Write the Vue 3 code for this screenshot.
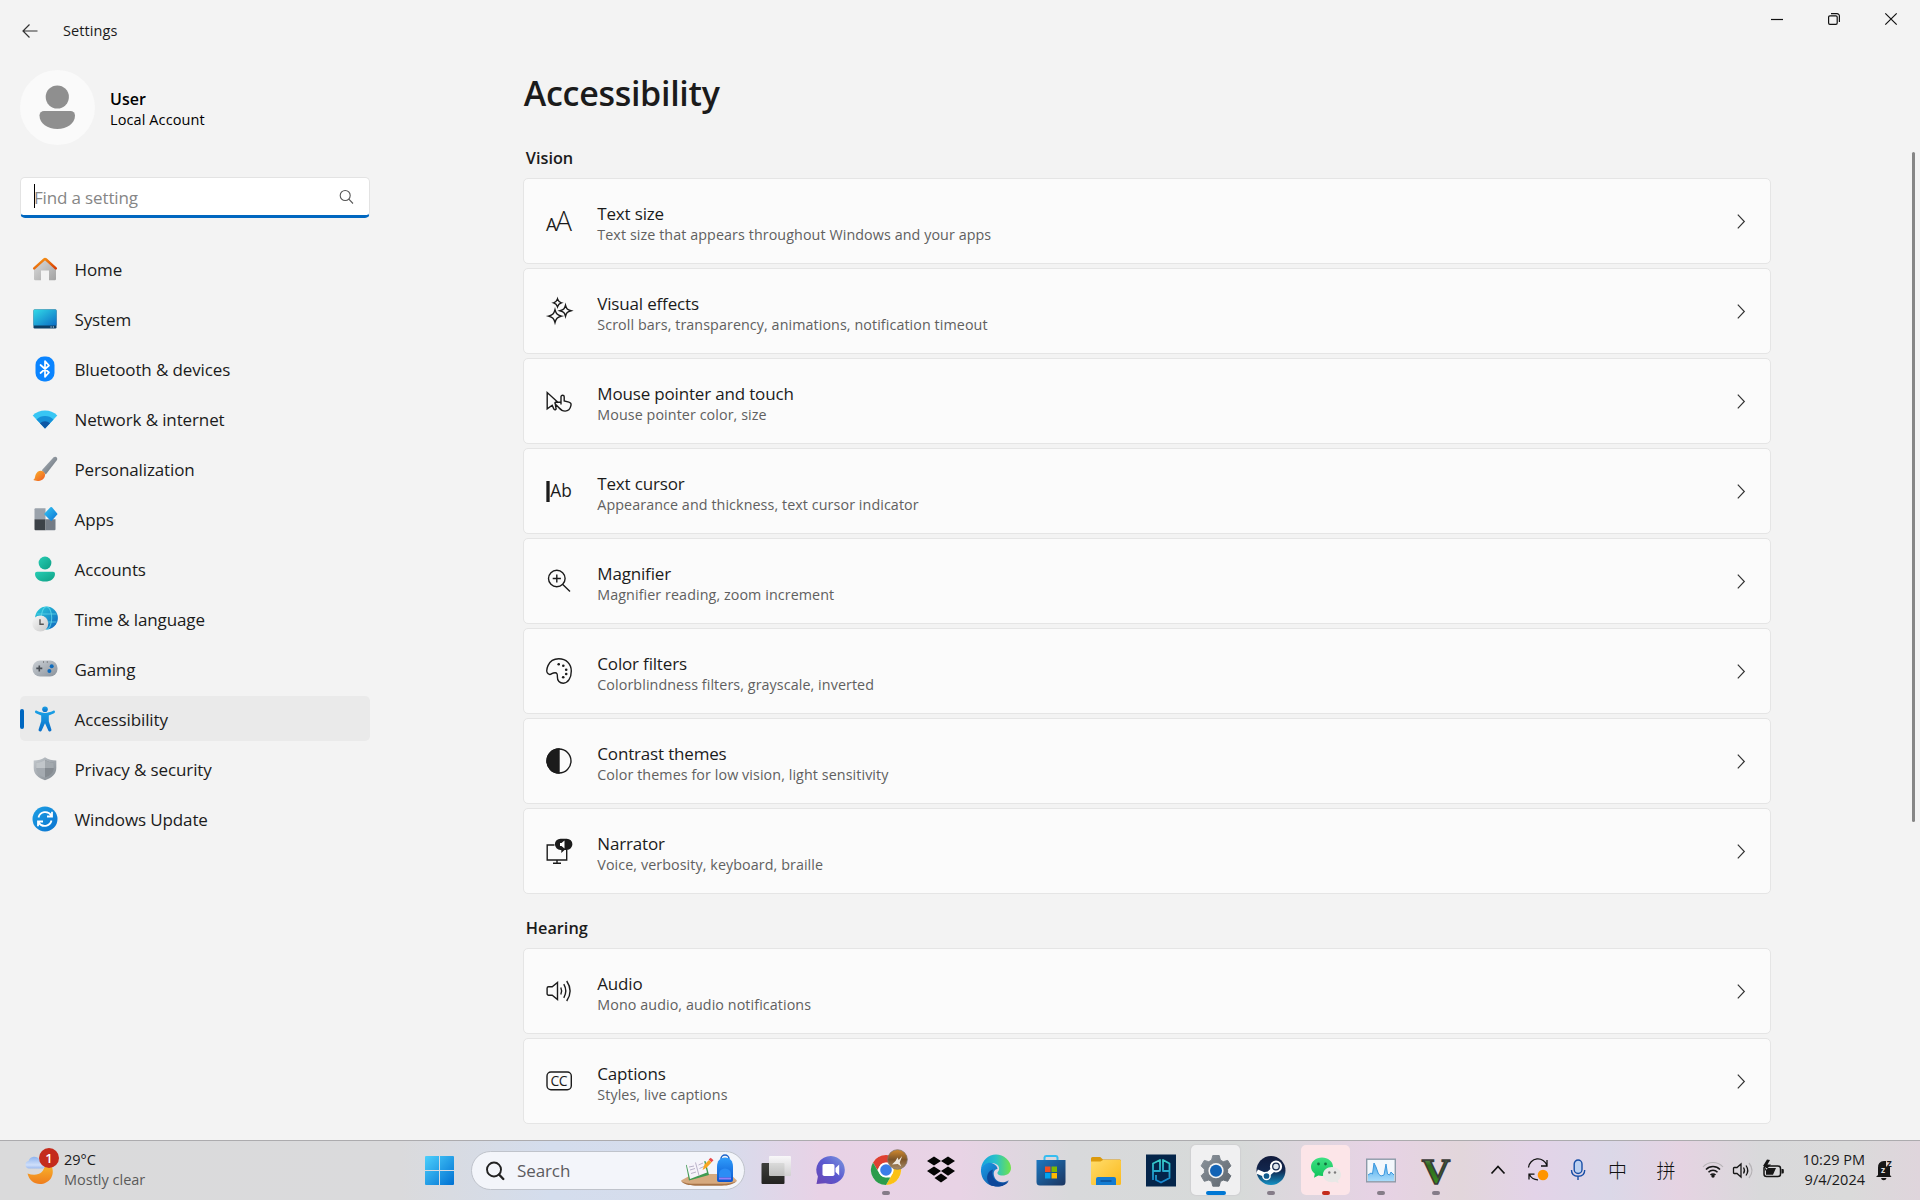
<script setup>
const nav = [
  { id: 'home', label: 'Home' },
  { id: 'system', label: 'System' },
  { id: 'bluetooth', label: 'Bluetooth & devices' },
  { id: 'network', label: 'Network & internet' },
  { id: 'personalization', label: 'Personalization' },
  { id: 'apps', label: 'Apps' },
  { id: 'accounts', label: 'Accounts' },
  { id: 'time', label: 'Time & language' },
  { id: 'gaming', label: 'Gaming' },
  { id: 'accessibility', label: 'Accessibility', active: true },
  { id: 'privacy', label: 'Privacy & security' },
  { id: 'update', label: 'Windows Update' },
]

const sections = [
  {
    title: 'Vision',
    items: [
      { id: 'textsize', title: 'Text size', desc: 'Text size that appears throughout Windows and your apps' },
      { id: 'effects', title: 'Visual effects', desc: 'Scroll bars, transparency, animations, notification timeout' },
      { id: 'pointer', title: 'Mouse pointer and touch', desc: 'Mouse pointer color, size' },
      { id: 'cursor', title: 'Text cursor', desc: 'Appearance and thickness, text cursor indicator' },
      { id: 'magnifier', title: 'Magnifier', desc: 'Magnifier reading, zoom increment' },
      { id: 'filters', title: 'Color filters', desc: 'Colorblindness filters, grayscale, inverted' },
      { id: 'contrast', title: 'Contrast themes', desc: 'Color themes for low vision, light sensitivity' },
      { id: 'narrator', title: 'Narrator', desc: 'Voice, verbosity, keyboard, braille' },
    ],
  },
  {
    title: 'Hearing',
    items: [
      { id: 'audio', title: 'Audio', desc: 'Mono audio, audio notifications' },
      { id: 'captions', title: 'Captions', desc: 'Styles, live captions' },
    ],
  },
]

const tasks = [
  { id: 'taskview' },
  { id: 'chat' },
  { id: 'chrome', mark: 'run' },
  { id: 'dropbox' },
  { id: 'edge' },
  { id: 'store' },
  { id: 'explorer' },
  { id: 'shield' },
  { id: 'settings', mark: 'current' },
  { id: 'steam', mark: 'run' },
  { id: 'wechat', mark: 'alert' },
  { id: 'monitor', mark: 'run' },
  { id: 'vgame', mark: 'run' },
]

// 26 x 26 artwork for the navigation list
const navArt = {
  home: `<defs><linearGradient id="h1" x2="1" y2="1"><stop stop-color="#dedede"/><stop offset="1" stop-color="#a2a2a2"/></linearGradient><linearGradient id="h2" x2="1" y2="1"><stop stop-color="#f9a01b"/><stop offset="1" stop-color="#d83b01"/></linearGradient></defs>
    <path d="M2 11.500 13 1.800l11 9.700V23a1.200 1.200 0 0 1-1.200 1.200H17V14.500H9v9.700H3.200A1.200 1.200 0 0 1 2 23z" fill="url(#h1)"/><path d="M2.200 12.400 12.200 3.300a1.200 1.200 0 0 1 1.600 0l10 9.100" fill="none" stroke="url(#h2)" stroke-width="2.500" stroke-linecap="round"/>`,
  system: `<defs><linearGradient id="s1" x2="1" y2="1"><stop stop-color="#32dbe8"/><stop offset="1" stop-color="#0b6cc4"/></linearGradient></defs>
    <rect x="1.500" y="3.500" width="23" height="19" rx="1.200" fill="#0c3f66"/><path d="M1.500 19.500V4.700a1.200 1.200 0 0 1 1.200-1.200h20.600a1.200 1.200 0 0 1 1.200 1.200v14.800z" fill="url(#s1)"/><path d="M18.500 20.500h1.200v1h-1.200zM20.800 20.500H22v1h-1.200z" fill="#cfe6f5"/>`,
  bluetooth: `<rect x="3.500" y=".5" width="19" height="25" rx="8.500" fill="#0a84ff"/><path d="M8.500 9 17 16.500 13 20.800V5.200L17 9.500 8.500 17" fill="none" stroke="#fff" stroke-width="1.700" stroke-linejoin="round" stroke-linecap="round"/>`,
  network: `<path d="M13 22.500.7 9.500a17.500 17.500 0 0 1 24.600 0z" fill="#38c6f4"/><path d="M13 22.500 4.500 13.400a12.300 12.300 0 0 1 17 0z" fill="#1690d8"/><path d="M13 22.500 8 17.200a7.400 7.400 0 0 1 10 0z" fill="#0d58a5"/>`,
  personalization: `<defs><linearGradient id="p1" x2="1" y2="1"><stop stop-color="#b4bcc4"/><stop offset="1" stop-color="#5d656d"/></linearGradient><linearGradient id="p2" x2="1" y2="1"><stop stop-color="#fbb62a"/><stop offset="1" stop-color="#ee5a24"/></linearGradient></defs>
    <path d="M9.800 14.300 21.600 1.300c1.800-1.600 4.600.2 3.400 2.600L13.800 18.400z" fill="url(#p1)"/><path d="M1 23.800c2 0 1.700-2.400 2.600-5 1.200-3.600 5-5.300 7.700-3.300 3 2.300 1.900 6.400-1 8.200-2.800 1.700-6.800 1.600-9.300.1z" fill="url(#p2)"/>`,
  apps: `<defs><linearGradient id="a1" x2="1" y2="1"><stop stop-color="#34c6f3"/><stop offset="1" stop-color="#0c74d4"/></linearGradient></defs>
    <path d="M2.500 3.200a1 1 0 0 1 1-1h10v11h-11z" fill="#9aa2ab"/><path d="M2.500 13.200h11v11h-10a1 1 0 0 1-1-1z" fill="#3c4248"/><path d="M13.500 13.200h10v10a1 1 0 0 1-1 1h-9z" fill="#747c86"/><path d="m18.400 1.300-5.700 5.900a1.100 1.100 0 0 0 0 1.600l5.700 5.800a1.100 1.100 0 0 0 1.600 0l5-5.800a1.100 1.100 0 0 0 0-1.600l-5-5.900a1.100 1.100 0 0 0-1.600 0z" fill="url(#a1)"/>`,
  accounts: `<defs><linearGradient id="c1" x2="1" y2="1"><stop stop-color="#27cdb4"/><stop offset="1" stop-color="#0f9f84"/></linearGradient></defs>
    <circle cx="13" cy="7" r="6.400" fill="url(#c1)"/><path d="M5 15.700h16a2 2 0 0 1 2 2c0 4.800-4.300 7.900-10 7.900S3 22.500 3 17.700a2 2 0 0 1 2-2z" fill="url(#c1)"/>`,
  time: `<defs><linearGradient id="t1" x2="1" y2="1"><stop stop-color="#2bd0dc"/><stop offset="1" stop-color="#0f62bd"/></linearGradient><linearGradient id="t2" x2="1" y2="1"><stop stop-color="#f8f8f8"/><stop offset="1" stop-color="#c8c8c8"/></linearGradient></defs>
    <circle cx="14.500" cy="12" r="11.400" fill="url(#t1)"/><path d="M4.500 8h20M4.500 16h20" stroke="#66dcec" stroke-width="1.100" opacity=".7"/><ellipse cx="14.500" cy="12" rx="5.200" ry="11.200" fill="none" stroke="#66dcec" stroke-width="1.100" opacity=".7"/><circle cx="8.300" cy="17.500" r="8" fill="url(#t2)"/><path d="M8 13.200v5h3.800" fill="none" stroke="#555" stroke-width="1.400"/>`,
  gaming: `<defs><linearGradient id="g1" x2="1" y2="1"><stop stop-color="#cbd0d5"/><stop offset="1" stop-color="#8a929b"/></linearGradient></defs>
    <rect x=".5" y="4.500" width="25" height="16" rx="7.500" fill="url(#g1)"/><path d="M11 6h1M14.800 6h1" stroke="#555" stroke-width="1.200"/><path d="M4.300 12.400h6M7.300 9.400v6" stroke="#484e55" stroke-width="1.600"/><circle cx="19.700" cy="10.200" r="2" fill="#0f6cbd"/><circle cx="17.400" cy="15" r="2" fill="#0f6cbd"/>`,
  accessibility: `<defs><linearGradient id="x1" x2="0" y2="1"><stop stop-color="#1ba1e6"/><stop offset="1" stop-color="#0a6fc9"/></linearGradient></defs>
    <g fill="url(#x1)"><circle cx="13" cy="3.300" r="2.800"/><path d="M4.800 4.700c-1.600-.7-2.700 1.700-.9 2.500L9.200 9.500v5.800L6.600 23.500c-.5 2 2.400 2.800 3.100.9L13 17.200l3.300 7.200c.7 1.900 3.600 1.100 3.100-.9l-2.600-8.200V9.500l5.300-2.300c1.800-.8.7-3.200-.9-2.500-3 1.400-5.600 2.200-8.200 2.200s-5.200-.8-8.200-2.200z"/></g>`,
  privacy: `<defs><linearGradient id="v1" x2="1" y2="1"><stop stop-color="#c5cacf"/><stop offset="1" stop-color="#80878e"/></linearGradient></defs>
    <path d="M13 1.200c3.300 2.300 7 3.200 11.300 3.300V12c0 6-4.500 10-11.300 12.300C6.200 22 1.700 18 1.700 12V4.500C6 4.400 9.700 3.500 13 1.200z" fill="url(#v1)"/><path d="M13 4.100c2.700 1.700 5.500 2.500 8.800 2.700V12c0 4.500-3.200 7.600-8.800 9.600z" fill="#858b91"/><path d="M13 4.100C10.300 5.800 7.500 6.600 4.200 6.800V12c0 4.500 3.200 7.600 8.800 9.600z" fill="#a4aab0"/><path d="M13 4.100c2.700 1.700 5.500 2.500 8.800 2.700V12H13z" fill="#a3a9ae"/><path d="M13 4.100C10.300 5.800 7.500 6.600 4.200 6.800V12H13z" fill="#c1c6ca"/>`,
  update: `<defs><linearGradient id="u1" x2="1" y2="1"><stop stop-color="#1da0e4"/><stop offset="1" stop-color="#0a72cf"/></linearGradient></defs>
    <circle cx="13" cy="13" r="12.500" fill="url(#u1)"/><g fill="none" stroke="#fff" stroke-width="1.800"><path d="M6.500 11.500a7 7 0 0 1 12.700-2.200M20 5.800v4.700h-5"/><path d="M19.500 14.500a7 7 0 0 1-12.700 2.200M6 20.200v-4.700h5"/></g>`,
}

// 26 x 26 monochrome glyphs for the cards
const cardArt = {
  textsize: `<g fill="#1b1b1b" stroke="none" font-family="Open Sans, sans-serif"><text x="0" y="23.300" font-size="18.500" textLength="11" lengthAdjust="spacingAndGlyphs">A</text><text x="9.500" y="23.300" font-size="28" font-weight="300" textLength="16.500" lengthAdjust="spacingAndGlyphs">A</text></g>`,
  effects: `<path d="M11.500.9c.8 2.500 1.400 3.100 3.900 3.900-2.500.8-3.100 1.400-3.900 3.900-.8-2.500-1.400-3.100-3.900-3.900 2.500-.8 3.100-1.400 3.900-3.900zM19.500 7.200c1 3.700 1.800 4.500 5.500 5.500-3.700 1-4.500 1.800-5.500 5.500-1-3.700-1.800-4.500-5.500-5.500 3.700-1 4.500-1.800 5.500-5.500zM9 11.600c1.200 4.500 2.100 5.300 6.500 6.500-4.400 1.200-5.300 2.100-6.500 6.500-1.200-4.400-2.100-5.300-6.500-6.500 4.400-1.200 5.300-2 6.500-6.500z"/>`,
  pointer: `<path d="M9.300 16.200 10 20.300a1.100 1.100 0 0 1-2.100.8L6.200 17.200 1.200 20.800V4.600L12.400 14.700M9.300 14.300H15V8.800a1.600 1.600 0 0 1 3.200 0v4.100l4.700 1.200c1.900.5 2.500 1.800 2 3.600-.7 3.400-2.600 5.400-5.800 5.400-2.800 0-4.400-1.300-6.400-3.600l-2.900-3c-.8-1-1.300-1.600-.5-2.200zM15 13v3.500"/>`,
  cursor: `<path d="M2 3v21" stroke-width="3.300"/><text x="4.300" y="19" font-size="18.500" textLength="21.500" lengthAdjust="spacingAndGlyphs" fill="#1b1b1b" stroke="none" font-family="Open Sans, sans-serif">Ab</text>`,
  magnifier: `<circle cx="10.800" cy="10.500" r="8.300"/><path d="m16.800 16.500 7.200 7M10.800 6.400v8.200M6.700 10.500h8.200"/>`,
  filters: `<path d="M2.200 15.800C.3 14.200.6 10.800 2 7.600 4 3.200 8 .8 12.800.8c7.400 0 12.500 5.200 12.500 12.300 0 6.800-3.300 12.100-8 12.100-3.700 0-6-2.300-5.900-6.300.1-2.800-.5-4.200-2.300-4.200-1.300 0-2.200.3-3.300 1-1.200.8-2.600 1-3.600.1z"/><g fill="#1b1b1b" stroke="none"><circle cx="12.700" cy="6.300" r="1.300"/><circle cx="17.300" cy="7.800" r="1.300"/><circle cx="20.200" cy="11.700" r="1.300"/><circle cx="20.200" cy="16" r="1.300"/><circle cx="17.200" cy="19.300" r="1.300"/></g>`,
  contrast: `<circle cx="13" cy="13" r="12"/><path d="M13 1v24A12 12 0 0 1 13 1z" fill="#1b1b1b"/>`,
  narrator: `<path d="M8.500 7H1.200v15h19.500V12M11 22v3M7 25.300h8"/><path d="M14.500.7h6.300a5.500 5.500 0 0 1 0 11.200h-2.300l-3.200 3v-3h-.8a5.500 5.500 0 0 1 0-11.200z" fill="#1b1b1b" stroke="none"/><path d="M14 5h1.500L18.500 2.500v8L15.500 8H14z" fill="#fff" stroke="none"/>`,
  audio: `<path d="M11.500 4.500v17l-5.300-4.300H2.600a1.500 1.500 0 0 1-1.500-1.500v-5.400a1.500 1.500 0 0 1 1.500-1.500h3.600zM14.800 9.500q1.700 3.500 0 7M17.800 6.200q4 6.800 0 13.600M20.700 3q6.800 10 0 20"/>`,
  captions: `<rect x="1" y="4" width="24.300" height="17.800" rx="4"/><text x="4.600" y="18" font-size="14" font-weight="500" textLength="17" fill="#1b1b1b" stroke="none" font-family="Open Sans, sans-serif">CC</text>`,
}

// 36 x 36 artwork for the pinned and running applications
const taskArt = {
  taskview: `<defs><linearGradient id="k1" x2="0" y2="1"><stop stop-color="#3e3e3c"/><stop offset="1" stop-color="#232321"/></linearGradient><linearGradient id="k2" x2="0" y2="1"><stop stop-color="#fbfbfb"/><stop offset="1" stop-color="#cfcfcf"/></linearGradient></defs><rect x="3.500" y="11" width="23" height="21" rx="1" fill="url(#k1)"/><rect x="11" y="4" width="22" height="20" rx="1" fill="url(#k2)" opacity=".9"/>`,
  chat: `<defs><linearGradient id="q1" x1="1" x2="0" y2="1"><stop stop-color="#7d9be0"/><stop offset=".5" stop-color="#5a58cf"/><stop offset="1" stop-color="#6a45b4"/></linearGradient></defs><path d="M18 4a14.500 14 0 1 1-5.500 27.200L3.500 32l1.400-7.500A14.500 14 0 0 1 18 4z" fill="url(#q1)"/><rect x="9.500" y="12" width="12" height="12" rx="1.800" fill="#fff"/><path d="m22.500 16 3.700-3.500v11l-3.700-3.500z" fill="#fff"/>`,
  chrome: `<defs><linearGradient id="r1" x2="0" y2="1"><stop stop-color="#d28a2e"/><stop offset=".5" stop-color="#7d5529"/><stop offset="1" stop-color="#a88c68"/></linearGradient></defs><circle cx="18" cy="18" r="15" fill="#fff"/><path d="M5 10.500A15 15 0 0 1 31 10.500H18a7.500 7.500 0 0 0-6.500 3.700L9.300 18z" fill="#de4032"/><path d="M31 10.500A15 15 0 0 1 18 33l6.500-11.200a7.500 7.500 0 0 0 0-7.500L22.300 10.500z" fill="#fbc116"/><path d="M18 33A15 15 0 0 1 5 10.500l6.500 11.300a7.500 7.500 0 0 0 6.500 3.700h4.300z" fill="#2b9c4c"/><circle cx="18" cy="18" r="7.300" fill="#fff"/><circle cx="18" cy="18" r="5.800" fill="#3b7de8"/><circle cx="29.500" cy="7.500" r="9.800" fill="url(#r1)" stroke="#7f7464" stroke-width=".8"/><path d="m24 12.500 3.500-3.500 2-3.500 1.200 2.500 3.500-4-2.500 6.500 1.500 4-3.500-2.500z" fill="#eee7de"/>`,
  dropbox: `<g fill="#050505"><path d="m11 4.500 7 4.500-7 4.600L4 9zM25 4.500 32 9l-7 4.600L18 9zM11 14.500l7 4.600-7 4.600-7-4.600zM25 14.500l7 4.600-7 4.600-7-4.600zM11.500 26l6.500-4.500 6.500 4.500L18 30.600z"/></g>`,
  edge: `<defs><linearGradient id="e1" x2="1"><stop stop-color="#17a1df"/><stop offset=".5" stop-color="#29c2c8"/><stop offset="1" stop-color="#72e448"/></linearGradient><linearGradient id="e2" x2="1" y2="1"><stop stop-color="#1a9be6"/><stop offset="1" stop-color="#0f4a9a"/></linearGradient></defs><path d="M3 17C4 8 10.500 2.500 18 2.500S33 8.700 33 16c0 5-4 7.500-8.500 7.500-4 0-5.500-1.500-5-3 .8-1.500 2-2 1.500-5-.7-3-4-4.500-7.500-4.500C8.500 11 5 13 3 17z" fill="url(#e1)"/><path d="M3 17c2-5 7.500-7.500 12-5.500 3 1.300 4.500 3.500 4.500 5.500-4 0-5 5.500-2 10 3.500 4.500 9.500 3.800 13.300 1.200C26.500 35.200 18.200 35.500 12 33 6.200 30.500 2.500 24.500 3 17z" fill="url(#e2)"/><path d="M12 33c-4.500-5-4-13.500 3-15.500-2 5 .8 12 7.500 13.500 4 .8 7-.8 8.300-1.800C26.500 35.200 18 35.600 12 33z" fill="#0d479a"/>`,
  store: `<defs><linearGradient id="m1" x2="1" y2="1"><stop stop-color="#1c78c0"/><stop offset="1" stop-color="#1c3560"/></linearGradient></defs><path d="M11.500 9V5.500A1.800 1.800 0 0 1 13.300 4h9.400a1.800 1.800 0 0 1 1.800 1.500V9" fill="none" stroke="#36bdf0" stroke-width="2"/><path d="M3.500 8h29v22a3.500 3.500 0 0 1-3.500 3.500H7A3.500 3.500 0 0 1 3.500 30z" fill="url(#m1)"/><path d="M12 14.500h5.500V20H12z" fill="#f25022"/><path d="M18.500 14.500H24V20h-5.500z" fill="#7fba00"/><path d="M12 21h5.500v5.500H12z" fill="#00a4ef"/><path d="M18.500 21H24v5.500h-5.500z" fill="#ffb900"/>`,
  explorer: `<defs><linearGradient id="f1" x2="1" y2="1"><stop stop-color="#ffdc6a"/><stop offset="1" stop-color="#fbb91c"/></linearGradient></defs><path d="M3 10V6.500A1.500 1.500 0 0 1 4.500 5h7.700L15 7.500h17A1.200 1.200 0 0 1 33 8.700V13H3z" fill="#dc9a0c"/><path d="M3 9.500h9.500L15 8h17a1 1 0 0 1 1 1v22.500a1.500 1.500 0 0 1-1.500 1.500h-27A1.500 1.500 0 0 1 3 31.500z" fill="url(#f1)"/><path d="M8 33v-6a2 2 0 0 1 2-2h16a2 2 0 0 1 2 2v6z" fill="#137bd1"/><path d="M12.500 29h11" stroke="#0b4f96" stroke-width="1.500"/>`,
  shield: `<defs><linearGradient id="n1" gradientUnits="userSpaceOnUse" x1="0" y1="7" x2="0" y2="30"><stop stop-color="#3ad0c8"/><stop offset="1" stop-color="#1686cf"/></linearGradient></defs><path d="M3 2.500h30v32H3z" fill="#04254a"/><path d="M10 28V11.500L17 8v11h-6.500M26.500 14v-2.500L20 8v11h6.500v7L18 30.500 13 28v-5M26.500 19v-5" fill="none" stroke="url(#n1)" stroke-width="1.800" stroke-linejoin="round"/>`,
  settings: `<defs><linearGradient id="w1" x2="1" y2="1"><stop stop-color="#8b939b"/><stop offset="1" stop-color="#5e666e"/></linearGradient></defs><path d="M14.800 3.500h6.400l1.200 4.600 2.800 1.600 4.500-1.300 3.200 5.500-3.300 3.300v3.300l3.300 3.300-3.200 5.500-4.500-1.300-2.800 1.600-1.200 4.600h-6.400l-1.200-4.600-2.800-1.600-4.500 1.300-3.200-5.500 3.300-3.300v-3.300L3.100 13.900l3.200-5.500 4.500 1.300 2.800-1.600z" fill="url(#w1)" stroke="url(#w1)" stroke-linejoin="round"/><circle cx="18" cy="18.700" r="7.600" fill="#f4f4f4"/><circle cx="18" cy="18.700" r="6" fill="#1263b5"/>`,
  steam: `<defs><linearGradient id="z1" x2="0" y2="1"><stop stop-color="#101a3b"/><stop offset=".5" stop-color="#12274e"/><stop offset="1" stop-color="#1392c5"/></linearGradient></defs><circle cx="18" cy="18.500" r="14.500" fill="url(#z1)"/><path d="m4 19.500 9.500 4L21 17" fill="none" stroke="#fff" stroke-width="4.500"/><circle cx="13.500" cy="24" r="3.600" fill="#0f5a8c" stroke="#fff" stroke-width="1.500"/><circle cx="23" cy="14.500" r="5" fill="#13264b" stroke="#fff" stroke-width="2.200"/><circle cx="23" cy="14.500" r="2.700" fill="#dfe6ee"/>`,
  wechat: `<defs><linearGradient id="y1" x2="0" y2="1"><stop stop-color="#3fe083"/><stop offset="1" stop-color="#0fc35a"/></linearGradient></defs><path d="M14 5.500c6 0 11 4 11 9.300S20 24 14 24c-1.300 0-2.500-.2-3.700-.5L6 25.800l.8-4C4.500 20 3 17.600 3 14.800 3 9.500 8 5.500 14 5.500z" fill="url(#y1)"/><circle cx="10.500" cy="12" r="1.400" fill="#12713d"/><circle cx="17.500" cy="12" r="1.400" fill="#12713d"/><path d="M24 15c5 0 9 3.300 9 7.700 0 2.300-1.200 4.300-3 5.600l.6 3-3.300-1.500c-1 .3-2.100.4-3.300.4-5 0-9-3.100-9-7.500S19 15 24 15z" fill="#e8e8e6"/><circle cx="21.300" cy="20.500" r="1.200" fill="#7b7b7b"/><circle cx="27" cy="20.500" r="1.200" fill="#7b7b7b"/>`,
  monitor: `<defs><linearGradient id="o1" x2="0" y2="1"><stop stop-color="#4aa8ea"/><stop offset="1" stop-color="#a8dcfb"/></linearGradient></defs><rect x="3.700" y="7.200" width="28.600" height="22.600" fill="#f3f8fc" stroke="#8c9aa8" stroke-width="1.400"/><path d="M5 29v-6l3-2 1.500 1 1.500-11 2 4 2.500 7 2.500 2 3-1 2-11 1.500 10 2 1 1.500-3L31 23v6z" fill="url(#o1)"/><path d="M5 23l3-2 1.500 1L11 11l2 4 2.500 7 2.500 2 3-1 2-11 1.500 10 2 1 1.500-3L31 23" fill="none" stroke="#3c98de"/>`,
  vgame: `<defs><linearGradient id="i1" x2="0" y2="1"><stop stop-color="#93a889"/><stop offset=".35" stop-color="#2d6a1c"/><stop offset="1" stop-color="#3f9a22"/></linearGradient></defs><text x="18" y="31.500" text-anchor="middle" font-family="Liberation Serif, serif" font-weight="700" font-size="36" textLength="28.500" lengthAdjust="spacingAndGlyphs" fill="url(#i1)" stroke="#3a3a38" stroke-width="1.500">V</text>`,
}
</script>

<template>
  <div class="desktop">
    <main class="window">
      <aside class="side">
        <div class="titlebar">
          <svg class="back" width="16" height="16" viewBox="0 0 16 16"><path d="M15.500 8H1M7.500 1.500 1 8l6.500 6.500" fill="none" stroke="#333" stroke-width="1.200" /></svg>
          <span>Settings</span>
        </div>
        <div class="user">
          <div class="avatar">
            <svg width="75" height="75" viewBox="0 0 75 75" fill="#8f8f8f"><circle cx="37.300" cy="27" r="11.600" /><path d="M24 41h26.500a4.500 4.500 0 0 1 4.500 4.500C55 53.500 47 59 37.300 59S19.500 53.500 19.500 45.500A4.500 4.500 0 0 1 24 41z" /></svg>
          </div>
          <div class="who">
            <div class="name">User</div>
            <div class="kind">Local Account</div>
          </div>
        </div>
        <div class="find">
          <i class="caret"></i>
          <span>Find a setting</span>
          <svg width="15" height="15" viewBox="0 0 15 15" fill="none" stroke="#555" stroke-width="1.100"><circle cx="6.200" cy="6.500" r="5" /><path d="m9.800 10.200 4.200 4.300" /></svg>
        </div>
        <nav>
          <div v-for="n in nav" :key="n.id" class="link" :class="{ active: n.active }">
            <svg width="26" height="26" viewBox="0 0 26 26" v-html="navArt[n.id]"></svg>
            <span>{{ n.label }}</span>
          </div>
        </nav>
      </aside>

      <section class="content">
        <h1>Accessibility</h1>
        <div v-for="s in sections" :key="s.title" class="group">
          <h2>{{ s.title }}</h2>
          <div v-for="c in s.items" :key="c.id" class="card">
            <svg class="glyph" width="26" height="26" viewBox="0 0 26 26" v-html="cardArt[c.id]"></svg>
            <div class="text">
              <div class="card-title">{{ c.title }}</div>
              <div class="card-desc">{{ c.desc }}</div>
            </div>
            <svg class="chev" width="8" height="15" viewBox="0 0 8 15"><path d="M.8.7 7.300 7.500.8 14.300" fill="none" stroke="#333" stroke-width="1.200" /></svg>
          </div>
        </div>
      </section>

      <div class="edge">
        <div class="controls">
          <svg width="12" height="12" viewBox="0 0 12 12"><path d="M0 6.500h12" stroke="#111" stroke-width="1.200" /></svg>
          <svg width="12" height="12" viewBox="0 0 12 12" fill="none" stroke="#111" stroke-width="1.200"><rect x=".6" y="2.800" width="8.600" height="8.600" rx="1.300" /><path d="M3 .6h6A2.400 2.400 0 0 1 11.400 3v6" /></svg>
          <svg width="12" height="12" viewBox="0 0 12 12"><path d="m.3.3 11.400 11.400M11.700.3.3 11.700" stroke="#111" stroke-width="1.200" /></svg>
        </div>
        <div class="scrollbar"></div>
      </div>
    </main>

    <footer class="taskbar">
      <div class="weather">
        <div class="sky">
          <svg width="30" height="32" viewBox="0 0 30 32">
            <defs>
              <linearGradient id="moon" x2="0" y2="1"><stop stop-color="#f8b62c" /><stop offset="1" stop-color="#ef7d1d" /></linearGradient>
              <linearGradient id="cloud" x2="0" y2="1"><stop stop-color="#8fb4ee" /><stop offset=".7" stop-color="#cfdffa" /><stop offset="1" stop-color="#9dbbf0" /></linearGradient>
            </defs>
            <path d="M27 12c3 9-3 17-12 17C9 29 4 25 2.500 18.500 12 22 20 18 19.500 9z" fill="url(#moon)" />
            <path d="M4 13.500a3.800 3.800 0 0 1-.5-7.500A6 6 0 0 1 14.500 5 4.500 4.500 0 0 1 18 13.500z" fill="url(#cloud)" />
          </svg>
          <b>1</b>
        </div>
        <div class="lines">
          <div>29°C</div>
          <div class="dim">Mostly clear</div>
        </div>
      </div>

      <svg class="start" width="29" height="29" viewBox="0 0 29 29">
        <defs><linearGradient id="win" gradientUnits="userSpaceOnUse" x2="29" y2="29"><stop stop-color="#4cd0fc" /><stop offset="1" stop-color="#0070d2" /></linearGradient></defs>
        <path d="M1 0h13v14H0V1a1 1 0 0 1 1-1zM15 0h13a1 1 0 0 1 1 1v13H15zM0 15h14v14H1a1 1 0 0 1-1-1zM15 15h14v13a1 1 0 0 1-1 1H15z" fill="url(#win)" />
      </svg>

      <div class="search">
        <svg width="20" height="20" viewBox="0 0 20 20" fill="none" stroke="#222"><circle cx="9" cy="8.500" r="7" stroke-width="1.900" /><path d="m14 13.500 4.300 4.500" stroke-width="2.400" stroke-linecap="round" /></svg>
        <span>Search</span>
        <svg class="school" width="58" height="32" viewBox="0 0 58 32">
          <defs><linearGradient id="bag" x2="0" y2="1"><stop stop-color="#2f9dfb" /><stop offset="1" stop-color="#0a55d0" /></linearGradient></defs>
          <path d="M1 25.500 13 19h37l7 6.500c-3 3-10 4.500-16 4.500H15C9 30 3 28.500 1 25.500z" fill="#d6aa7f" />
          <path d="M1 26c3 2 8 2.800 14 2.800h26c6 0 12-.8 16-2.800-3 3-9 4.700-15 4.700H15C9 30.700 3 29 1 26z" fill="#a87549" />
          <path d="m6 10 3 15.500 20-5.500-3.500-14z" fill="#3f9b51" />
          <path d="m6.500 9 9-1.500 8-4 3.500 14-8 3-9 3.500z" fill="#f6f3fa" />
          <path d="m15.500 7.500 3.500 13M9 12l5-1M10 15l5-1.500M11 18.500l5-1.500M18.500 10l4.500-2M19.500 13.500l4.500-2" stroke="#b8b2c8" fill="none" />
          <path d="m22.500 15 2-5.500L29 5l2.500 2.500-5 5.300z" fill="#f6a623" /><path d="m28.700 4.500 2-1.700 2.800 2.500-2 2z" fill="#ea4a4a" />
          <path d="M41 4a4 4 0 0 1 8 0" fill="none" stroke="#1b62c9" stroke-width="1.500" />
          <path d="M37 12c0-6 3-9.500 8-9.500s8 3.500 8 9.500v13a2 2 0 0 1-2 2H39a2 2 0 0 1-2-2z" fill="url(#bag)" />
          <path d="M39 19a6 5.500 0 0 1 12 0v3H39z" fill="#2b8df5" /><path d="M39 22.500h12v2H39z" fill="#9580f6" />
        </svg>
      </div>

      <div class="tasks">
        <div v-for="t in tasks" :key="t.id" class="task" :class="[t.mark]">
          <svg width="36" height="36" viewBox="0 0 36 36" overflow="visible" v-html="taskArt[t.id]"></svg>
          <i v-if="t.mark" class="mark"></i>
        </div>
      </div>

      <div class="tray">
        <svg width="40" height="24" viewBox="0 0 40 24"><path d="m13.500 15.500 6.500-7 6.500 7" fill="none" stroke="#111" stroke-width="1.700" /></svg>
        <svg width="40" height="24" viewBox="0 0 40 24" fill="none" stroke="#111" stroke-width="1.300"><path d="M10.500 9.500A9.500 9.500 0 0 1 29 7.500M29 2v6h-6M11 21.500v-5.300h5.500M11.500 16.800a9.500 9.500 0 0 0 8.500 5" /><circle cx="25" cy="17" r="5.300" fill="#ff9500" stroke="none" /></svg>
        <svg width="40" height="24" viewBox="0 0 40 24" fill="none" stroke="#174ea6" stroke-width="1.400"><rect x="16.200" y="2" width="7.800" height="13.500" rx="3.900" fill="#bcd0f0" /><path d="M13.500 12c0 4.500 2.800 6.300 6.600 6.300s6.600-1.800 6.600-6.300M20 18.300V22" /></svg>
        <span class="ime">中</span>
        <span class="ime wide">拼</span>
        <svg width="30" height="24" viewBox="0 0 30 24" fill="none" stroke-width="1.500"><path d="M5 9a13.500 13.500 0 0 1 20 0" stroke="#b6b3b6" stroke-width="1.100" /><path d="M8 11.500a9.800 9.800 0 0 1 14 0M10.500 14.300a6.200 6.200 0 0 1 9 0" stroke="#161616" /><path d="M12.500 17a3.500 3.500 0 0 1 5 0" stroke="#161616" /><circle cx="15" cy="18" r="1.700" fill="#161616" /></svg>
        <svg width="30" height="24" viewBox="0 0 30 24" fill="none" stroke="#161616" stroke-width="1.300"><path d="M13 6v13l-4-3.500H6.200a.7.700 0 0 1-.7-.7v-4.600a.7.700 0 0 1 .7-.7H9zM15.500 9.500q2 3 0 6M18 7.500q3.500 5 0 10" /><path d="M21 5q6 7.500 0 15" stroke="#b6b3b6" /></svg>
        <svg width="30" height="24" viewBox="0 0 30 24"><rect x="6" y="8" width="16.500" height="10.500" rx="2.500" fill="none" stroke="#161616" stroke-width="1.500" /><path d="M8 10h10l-3 6.800H8zM23.500 11h1.300a1 1 0 0 1 1 1v2.600a1 1 0 0 1-1 1h-1.300zM9 1.500 5 8h3l-1.500 5.500L13 6.500H9.500L12 2z" fill="#161616" /></svg>
        <div class="clock">
          <div>10:29 PM</div>
          <div>9/4/2024</div>
        </div>
        <svg class="bell" width="20" height="22" viewBox="0 0 20 22"><path d="M3 16V9a6 6 0 0 1 6-7h2v5.500h4V16l1.500 2H1z" fill="#161616" /><path d="M6 19h5.500a2.800 2.800 0 0 1-5.500 0z" fill="#161616" /><text x="6" y="13.500" font-size="8.500" font-weight="700" fill="#ddd" font-family="Open Sans, sans-serif">z</text><text x="11.700" y="7.500" font-size="8.500" font-weight="700" fill="#161616" font-family="Open Sans, sans-serif">Z</text></svg>
      </div>
    </footer>
  </div>
</template>

<style>
body {
  margin: 0;
  overflow: hidden;
}
</style>

<style scoped>
.desktop {
  width: 1920px;
  height: 1200px;
  display: flex;
  flex-direction: column;
  overflow: hidden;
  background: #f3f3f3;
  color: #1b1b1b;
  font-family: "Open Sans", "Noto Sans", "Noto Sans CJK SC", sans-serif;
  white-space: nowrap;
}
.desktop svg {
  display: block;
  flex: none;
  overflow: visible;
}
.window {
  height: 1140px;
  display: flex;
}

.side {
  width: 350px;
  padding-left: 20px;
}
.titlebar {
  height: 62px;
  display: flex;
  align-items: center;
  padding-left: 2px;
  font-size: 14.5px;
  letter-spacing: 0.1px;
}
.titlebar span {
  padding-bottom: 2px;
}
.back {
  margin-right: 25px;
}
.user {
  margin-top: 8px;
  height: 75px;
  display: flex;
  align-items: center;
  color: #000;
}
.avatar {
  width: 75px;
  height: 75px;
  border-radius: 50%;
  background: #fafafa;
  margin-right: 15px;
}
.who {
  padding-top: 2px;
}
.name {
  font-size: 16px;
  line-height: 22px;
  font-weight: 600;
}
.kind {
  font-size: 14.5px;
  line-height: 20px;
  letter-spacing: 0.1px;
}
.find {
  box-sizing: border-box;
  margin-top: 32px;
  height: 41px;
  display: flex;
  align-items: center;
  padding: 0 15px 0 13px;
  background: #fff;
  border: 1px solid #e3e3e3;
  border-bottom: 3px solid #0067c0;
  border-radius: 5px;
  font-size: 17px;
  letter-spacing: -0.15px;
  color: #868686;
}
.find span {
  flex: 1;
  padding-top: 2px;
  margin-left: -1px;
}
.caret {
  width: 1px;
  height: 24px;
  background: #000;
  margin-top: -2px;
}
nav {
  margin-top: 28px;
  display: flex;
  flex-direction: column;
  gap: 5px;
}
.link {
  height: 45px;
  display: flex;
  align-items: center;
  gap: 16.500px;
  padding-left: 12px;
  border-radius: 5px;
  font-size: 17px;
  letter-spacing: -0.12px;
}
.link span {
  padding-top: 2px;
}
.link.active {
  background: #eaeaea;
}
.link.active::before {
  content: "";
  width: 4px;
  height: 20px;
  margin: 0 -8.500px 0 -12px;
  border-radius: 2px;
  background: #0067c0;
}

.content {
  width: 1249px;
  margin-left: 153px;
  padding-top: 67px;
}
h1 {
  margin: 0 0 0 1px;
  height: 73px;
  line-height: 52px;
  font-size: 34px;
  font-weight: 600;
  letter-spacing: -0.3px;
}
h2 {
  margin: 0 0 2px 3px;
  height: 36px;
  line-height: 36px;
  font-size: 16.300px;
  font-weight: 600;
}
.group {
  display: flex;
  flex-direction: column;
}
.group + .group {
  margin-top: 12px;
}
.card {
  box-sizing: border-box;
  height: 86px;
  margin-bottom: 4px;
  display: flex;
  align-items: center;
  padding: 0 25px 0 22px;
  background: #fbfbfb;
  border: 1px solid #e5e5e5;
  border-radius: 5px;
}
.glyph {
  fill: none;
  stroke: #1b1b1b;
  stroke-width: 1.4;
}
.text {
  flex: 1;
  padding: 4px 0 0 25.500px;
}
.card-title {
  font-size: 17px;
  line-height: 22px;
  padding-top: 2px;
  letter-spacing: -0.17px;
}
.card-desc {
  font-size: 14.3px;
  line-height: 20px;
  letter-spacing: 0.085px;
  color: #606060;
}

.edge {
  flex: 1;
  display: flex;
  flex-direction: column;
  align-items: flex-end;
}
.controls {
  height: 38px;
  display: flex;
  align-items: center;
  gap: 45px;
  padding-right: 23px;
}
.scrollbar {
  width: 3px;
  height: 670px;
  margin: 114px 5px 0 0;
  border-radius: 2px;
  background: #868686;
}

.taskbar {
  box-sizing: border-box;
  height: 60px;
  display: flex;
  align-items: center;
  border-top: 1px solid #acabae;
  background: linear-gradient(90deg, #dadadb 0, #dadadc 400px, #d4dded 550px, #d6dcec 720px, #e8d2e6 820px, #e8d3e5 960px, #d8d9db 1070px, #d7dad9 1240px, #e7d2e5 1380px, #e2d6db 1460px, #e3d3e8 1535px, #dbd8e8 1610px, #e5d3e2 1680px, #d9d9db 1760px, #dadada 1850px, #dfd5dc 1920px);
}
.weather {
  width: 400px;
  display: flex;
  align-items: center;
  padding-left: 25px;
}
.sky {
  position: relative;
  width: 30px;
  margin-right: 9px;
}
.sky b {
  position: absolute;
  left: 14px;
  top: -7px;
  width: 20px;
  height: 20px;
  border-radius: 50%;
  background: #c42b1c;
  color: #fff;
  font-size: 13px;
  line-height: 20px;
  font-weight: 600;
  text-align: center;
}
.lines,
.clock {
  font-size: 14.500px;
  line-height: 20px;
  padding-bottom: 2px;
}
.dim {
  color: #5a5a5a;
}
.search {
  box-sizing: border-box;
  width: 274px;
  height: 39px;
  margin: 0 3px 0 17px;
  display: flex;
  align-items: center;
  padding: 0 6px 0 13px;
  border: 1px solid #bfc3cb;
  border-radius: 20px;
  background: #f3f5fa;
  color: #5b5b5e;
  font-size: 17px;
  letter-spacing: -0.1px;
}
.search span {
  flex: 1;
  margin-left: 12px;
}
.tasks {
  display: flex;
}
.task {
  position: relative;
  box-sizing: border-box;
  width: 49px;
  height: 50px;
  margin: 0 3px 2px;
  padding: 7px 6.500px 0;
  border-radius: 5px;
}
.task.current {
  background: #f0f0f1;
  box-shadow: 0 0 1px 1px #d0d0d2;
}
.task.alert {
  background: #fce5e8;
}
.mark {
  position: absolute;
  left: 50%;
  bottom: 0;
  width: 8px;
  height: 4px;
  margin-left: -4px;
  border-radius: 2px;
  background: #857c88;
}
.current .mark {
  width: 20px;
  margin-left: -10px;
  background: #0078d4;
}
.alert .mark {
  background: #c42b1c;
}
.tray {
  flex: 1;
  display: flex;
  align-items: center;
  padding-left: 15px;
}
.tray > svg,
.ime {
  margin-bottom: 1px;
}
.ime {
  width: 39px;
  text-align: center;
  font-family: "Noto Sans CJK SC", sans-serif;
  font-size: 19px;
  line-height: 24px;
  font-weight: 300;
  color: #111;
}
.ime.wide {
  width: 58px;
  margin-right: 3px;
}
.clock {
  width: 77px;
  text-align: right;
}
.tray > .bell {
  margin: 0 0 1px 10px;
}
</style>
